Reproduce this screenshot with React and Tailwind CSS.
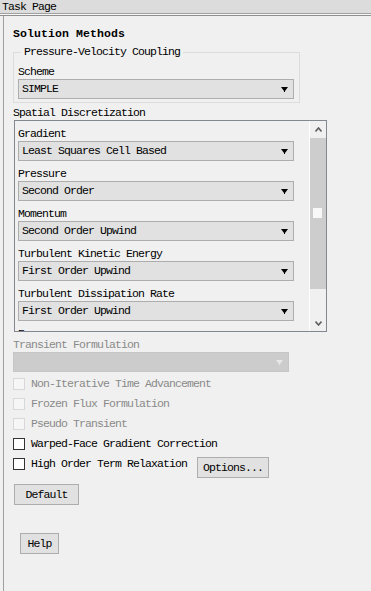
import React from "react";

const Arrow = ({ disabled }) => (
  <svg width="7" height="5" viewBox="0 0 7 5">
    <polygon points="0,0 7,0 4,4 3,4" fill={disabled ? "#e8e8e8" : "#000"} />
    <rect x="3" y="4" width="1" height="1" fill={disabled ? "#e8e8e8" : "#000"} />
  </svg>
);

const Dropdown = ({ value, disabled }) => (
  <div
    className={`h-[20px] w-[276px] flex items-center justify-between pl-[3px] pr-[5px] border ${
      disabled ? "bg-[#cccccc] border-[#c6c6c6]" : "bg-[#e1e1e1] border-[#adadad]"
    }`}
  >
    {value ? <span className="leading-[18px]">{value}</span> : <span />}
    <Arrow disabled={disabled} />
  </div>
);

const Label = ({ children }) => (
  <div className="mt-[6px] h-[14px] leading-[14px]">{children}</div>
);

const Check = ({ label, disabled, className = "" }) => (
  <div className={`flex items-center h-[20px] ml-[9px] ${className}`}>
    <div
      className={`w-[12px] h-[12px] border ${
        disabled ? "border-[#d8d8d8] bg-[#f6f6f6]" : "border-[#333333] bg-white"
      }`}
    />
    <span className={`ml-[6px] leading-[20px] ${disabled ? "text-[#8a8a8a]" : "text-black"}`}>
      {label}
    </span>
  </div>
);

const Button = ({ children, className = "" }) => (
  <div
    className={`h-[21px] flex items-center justify-center bg-[#e1e1e1] border border-[#adadad] ${className}`}
  >
    {children}
  </div>
);

const items = [
  ["Gradient", "Least Squares Cell Based"],
  ["Pressure", "Second Order"],
  ["Momentum", "Second Order Upwind"],
  ["Turbulent Kinetic Energy", "First Order Upwind"],
  ["Turbulent Dissipation Rate", "First Order Upwind"],
];

export default function App() {
  return (
    <div className="w-[371px] h-[591px] bg-[#f0f0f0] flex flex-col overflow-hidden font-['Liberation_Mono',monospace] text-[11.5px] tracking-[-0.9px] text-black">
      <div className="h-[14px] bg-[#dcdcdc] border-b border-[#a0a0a0] leading-[13px] pl-[2px]">
        Task Page
      </div>
      <div className="h-[2px] bg-[#f8f8f8] border-b border-[#8f8f8f]" />
      <div className="flex-1 ml-[3px] border-l border-[#a0a0a0] flex flex-col">
        <div className="ml-[9px] mt-[11px] h-[14px] leading-[14px] font-bold text-[11.5px] tracking-[0.1px]">
          Solution Methods
        </div>

        <fieldset className="ml-[9px] mt-[5px] w-[287px] border border-[#dcdcdc] pb-[3px]">
          <legend className="ml-[7px] px-[3px] h-[12px] leading-[12px]">
            Pressure-Velocity Coupling
          </legend>
          <div className="pl-[4px]">
            <div className="mt-[7px] h-[14px] leading-[14px]">Scheme</div>
            <Dropdown value="SIMPLE" />
          </div>
        </fieldset>

        <div className="ml-[9px] mt-[3px] h-[14px] leading-[14px]">Spatial Discretization</div>

        <div className="ml-[10px] w-[313px] h-[212px] border border-[#828790] flex">
          <div className="flex-1 overflow-hidden pl-[3px]">
            {items.map(([label, value]) => (
              <div key={label}>
                <Label>{label}</Label>
                <Dropdown value={value} />
              </div>
            ))}
            <div className="mt-[6px] h-[4px] leading-[14px] overflow-hidden">Energy</div>
          </div>
          <div className="w-[17px] border-l border-white flex flex-col">
            <div className="h-[17px] flex items-center justify-center">
              <svg width="7" height="5" viewBox="0 0 7 5">
                <polyline points="0.5,4.5 3.5,1 6.5,4.5" fill="none" stroke="#606060" strokeWidth="1.6" />
              </svg>
            </div>
            <div className="h-[151px] bg-[#cdcdcd] flex flex-col">
              <div className="ml-[3px] mt-[70px] w-[9px] h-[10px] bg-[#f8f8f8]" />
            </div>
            <div className="flex-1 flex items-end justify-center pb-[5px]">
              <svg width="7" height="5" viewBox="0 0 7 5">
                <polyline points="0.5,0.5 3.5,4 6.5,0.5" fill="none" stroke="#606060" strokeWidth="1.6" />
              </svg>
            </div>
          </div>
        </div>

        <div className="ml-[9px] mt-[6px] h-[14px] leading-[14px] text-[#8a8a8a]">
          Transient Formulation
        </div>
        <div className="ml-[9px]">
          <Dropdown value="" disabled />
        </div>

        <Check label="Non-Iterative Time Advancement" disabled className="mt-[2px]" />
        <Check label="Frozen Flux Formulation" disabled />
        <Check label="Pseudo Transient" disabled />
        <Check label="Warped-Face Gradient Correction" />
        <div className="flex items-start ml-[9px]">
          <div className="mt-[4px] w-[12px] h-[12px] border border-[#333333] bg-white" />
          <span className="ml-[6px] h-[20px] leading-[20px]">High Order Term Relaxation</span>
          <Button className="ml-[10px] mt-[3px] w-[72px]">Options...</Button>
        </div>

        <Button className="ml-[10px] mt-[6px] w-[65px]">Default</Button>
        <Button className="ml-[16px] mt-[28px] w-[39px]">Help</Button>
      </div>
    </div>
  );
}
